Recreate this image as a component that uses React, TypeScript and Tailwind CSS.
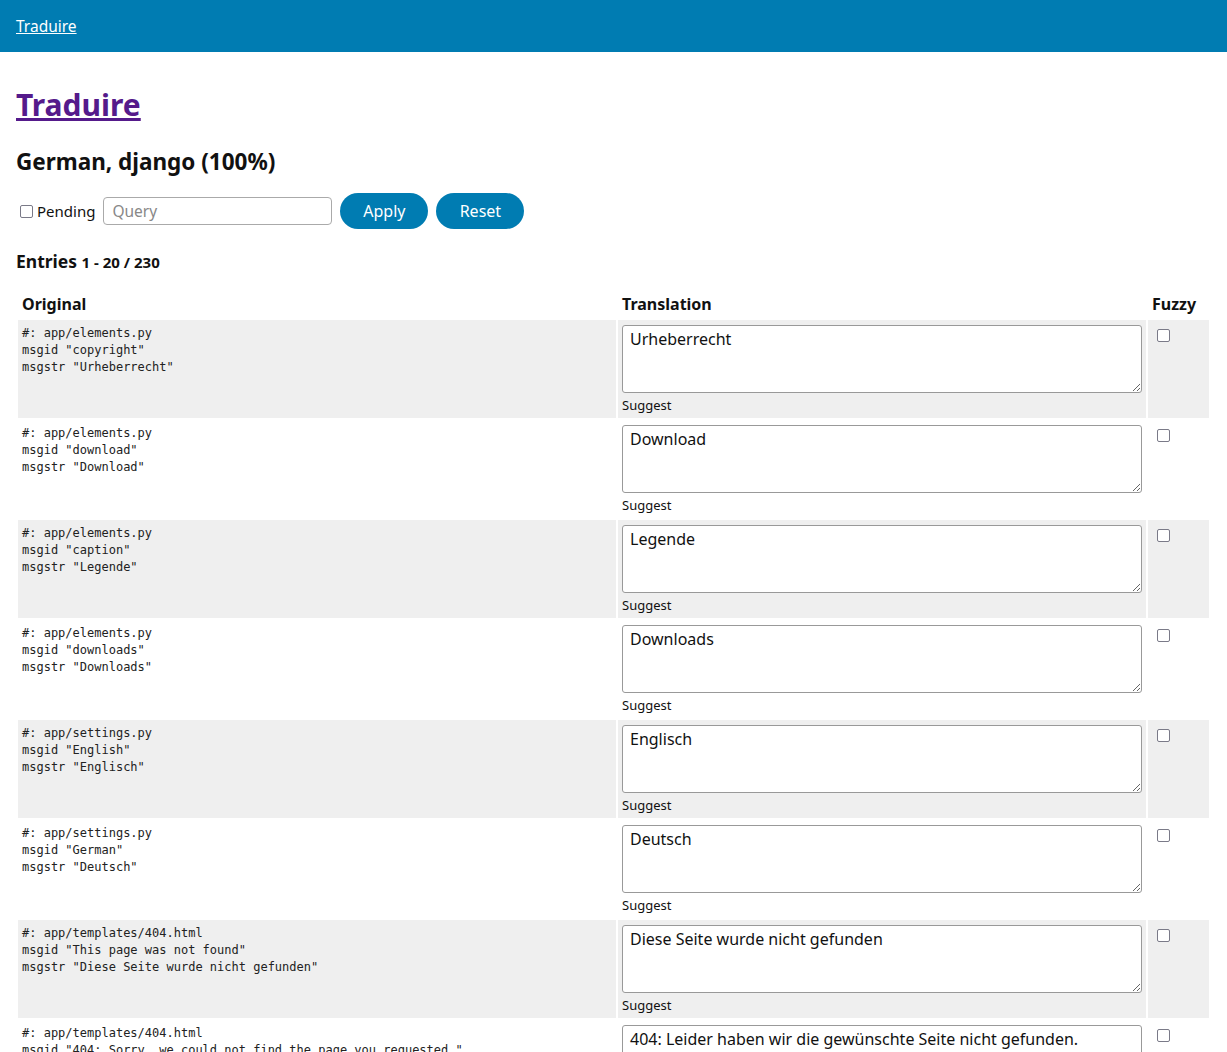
import React from "react";

const entries = [
  { ref: "app/elements.py", id: "copyright", str: "Urheberrecht" },
  { ref: "app/elements.py", id: "download", str: "Download" },
  { ref: "app/elements.py", id: "caption", str: "Legende" },
  { ref: "app/elements.py", id: "downloads", str: "Downloads" },
  { ref: "app/settings.py", id: "English", str: "Englisch" },
  { ref: "app/settings.py", id: "German", str: "Deutsch" },
  { ref: "app/templates/404.html", id: "This page was not found", str: "Diese Seite wurde nicht gefunden" },
  {
    ref: "app/templates/404.html",
    id: "404: Sorry, we could not find the page you requested.",
    str: "404: Leider haben wir die gewünschte Seite nicht gefunden.",
  },
];

const sans = "font-['Noto_Sans','Liberation_Sans',sans-serif]";

export default function App() {
  return (
    <div className={`min-h-screen bg-white text-[#111] ${sans}`}>
      {/* header */}
      <header className="h-[52px] bg-[#007cb2] px-4 flex items-center">
        <a href="#" className="text-white underline text-[15.5px] leading-6">
          Traduire
        </a>
      </header>

      <main className="px-4 pb-10">
        <h1 className="mt-[35px] text-[30px] leading-[36px] font-bold">
          <a href="#" className="text-[#551a8b] underline">
            Traduire
          </a>
        </h1>

        <h2 className="mt-[25px] text-[22.5px] leading-[28px] font-bold">
          German, django (100%)
        </h2>

        {/* filter */}
        <form className="mt-[17px] flex items-center gap-2 h-9">
          <label className="flex items-center text-[15px]">
            <input
              type="checkbox"
              className="appearance-none ml-1 mr-1 w-[13px] h-[13px] border border-[#7a7a88] rounded-[2px] bg-white"
            />
            Pending
          </label>
          <input
            type="text"
            placeholder="Query"
            className="w-[229px] h-7 border border-[#aaa] rounded px-2 text-[15.5px] outline-none placeholder:text-[#888]"
          />
          <button
            type="button"
            className="h-9 w-[88px] rounded-full bg-[#007cb2] text-white text-base"
          >
            Apply
          </button>
          <button
            type="button"
            className="h-9 w-[88px] rounded-full bg-[#007cb2] text-white text-base"
          >
            Reset
          </button>
        </form>

        <h3 className="mt-5 text-[17.5px] leading-6 font-bold">
          Entries <span className="text-[15px]">1 - 20 / 230</span>
        </h3>

        {/* table */}
        <table className="mt-[10px] w-full table-fixed border-separate border-spacing-[2px]">
          <colgroup>
            <col className="w-[598px]" />
            <col className="w-[528px]" />
            <col className="w-[61px]" />
          </colgroup>
          <thead>
            <tr className="text-left">
              <th className="px-1 pt-[6px] pb-[2px] text-base leading-6 font-bold">Original</th>
              <th className="px-1 pt-[6px] pb-[2px] text-base leading-6 font-bold">Translation</th>
              <th className="px-1 pt-[6px] pb-[2px] text-base leading-6 font-bold">Fuzzy</th>
            </tr>
          </thead>
          <tbody>
            {entries.map((e, i) => (
              <tr key={i} className={i % 2 === 0 ? "bg-[#efefef]" : "bg-white"}>
                <td className="px-1 pt-[5px] pb-1 align-top">
                  <pre className="font-['DejaVu_Sans_Mono',monospace] text-[12px] leading-[17px] text-[#222] whitespace-pre">
                    {`#: ${e.ref}\nmsgid "${e.id}"\nmsgstr "${e.str}"`}
                  </pre>
                </td>
                <td className="p-1 align-top">
                  <textarea
                    defaultValue={e.str}
                    className="mt-[1px] block w-full h-[68px] border border-[#999] rounded-[3px] bg-white px-[7px] pt-[2px] text-base leading-[22px] text-[#111] outline-none"
                  />
                  <div className="mt-[3px] text-[13px] leading-[18px]">Suggest</div>
                </td>
                <td className="p-1 align-top">
                  <input
                    type="checkbox"
                    className="appearance-none block ml-[5px] mt-[5px] w-[13px] h-[13px] border border-[#7a7a88] rounded-[2px] bg-white"
                  />
                </td>
              </tr>
            ))}
          </tbody>
        </table>
      </main>
    </div>
  );
}
